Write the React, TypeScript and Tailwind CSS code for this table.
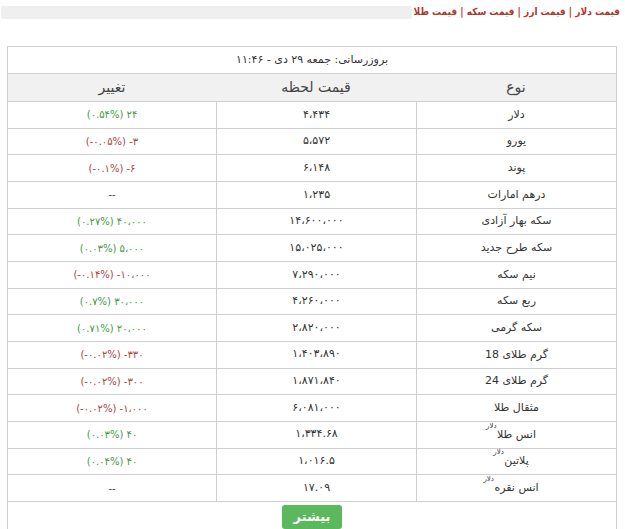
const rows: { name: string; unit?: boolean; price: string; change: string; tone: "up" | "down" | "none" }[] = [
  { name: "دلار", price: "۴،۴۳۴", change: "(۰.۵۴%) ۲۴", tone: "up" },
  { name: "یورو", price: "۵،۵۷۲", change: "(-۰.۰۵%) -۳", tone: "down" },
  { name: "پوند", price: "۶،۱۴۸", change: "(-۰.۱%) -۶", tone: "down" },
  { name: "درهم امارات", price: "۱،۲۳۵", change: "--", tone: "none" },
  { name: "سکه بهار آزادی", price: "۱۴،۶۰۰،۰۰۰", change: "(۰.۲۷%) ۴۰،۰۰۰", tone: "up" },
  { name: "سکه طرح جدید", price: "۱۵،۰۲۵،۰۰۰", change: "(۰.۰۳%) ۵،۰۰۰", tone: "up" },
  { name: "نیم سکه", price: "۷،۲۹۰،۰۰۰", change: "(-۰.۱۴%) -۱۰،۰۰۰", tone: "down" },
  { name: "ربع سکه", price: "۴،۲۶۰،۰۰۰", change: "(۰.۷%) ۳۰،۰۰۰", tone: "up" },
  { name: "سکه گرمی", price: "۲،۸۲۰،۰۰۰", change: "(۰.۷۱%) ۲۰،۰۰۰", tone: "up" },
  { name: "گرم طلای 18", price: "۱،۴۰۳،۸۹۰", change: "(-۰.۰۲%) -۳۳۰", tone: "down" },
  { name: "گرم طلای 24", price: "۱،۸۷۱،۸۴۰", change: "(-۰.۰۲%) -۳۰۰", tone: "down" },
  { name: "مثقال طلا", price: "۶،۰۸۱،۰۰۰", change: "(-۰.۰۲%) -۱،۰۰۰", tone: "down" },
  { name: "انس طلا", unit: true, price: "۱،۳۳۴.۶۸", change: "(۰.۰۳%) ۴۰", tone: "up" },
  { name: "پلاتین", unit: true, price: "۱،۰۱۶.۵", change: "(۰.۰۴%) ۴۰", tone: "up" },
  { name: "انس نقره", unit: true, price: "۱۷.۰۹", change: "--", tone: "none" },
];

function TitleBar() {
  return (
    <div className="flex items-center h-[14px] mt-[5px] pl-[1px] pr-[5px]">
      <div className="flex-1 h-[13px] bg-[#efefef] rounded-[2px]" />
      <p dir="rtl" className="pl-[2px] font-['DejaVu_Sans_Condensed','DejaVu_Sans',sans-serif] text-[10px] font-bold leading-[14px] text-[#b0372b] whitespace-nowrap">
        قیمت دلار | قیمت ارز | قیمت سکه | قیمت طلا
      </p>
    </div>
  );
}

function PriceRow({ row }: { row: (typeof rows)[number] }) {
  const toneClass = row.tone === "up" ? "text-[#3f9a3f]" : row.tone === "down" ? "text-[#a8443c]" : "text-[#444]";
  return (
    <div className="grid grid-cols-[200px_200px_1fr] h-[26.67px] border-t border-[#cfcfcf] text-[11px] text-[#333]">
      <div className="flex items-center justify-center border-l border-[#cfcfcf]">
        <span className="relative leading-[14px]">
          {row.name}
          {row.unit && <span className="absolute -top-[6px] -left-[11px] text-[7px] leading-[8px]">دلار</span>}
        </span>
      </div>
      <div className="flex items-center justify-center border-l border-[#cfcfcf]">{row.price}</div>
      <div className={`flex items-center justify-center ${toneClass}`}>
        <span dir="ltr" className="text-[10px]">{row.change}</span>
      </div>
    </div>
  );
}

export default function App() {
  return (
    <div className="w-[625px] h-[529px] bg-white overflow-hidden font-['DejaVu_Sans',sans-serif]">
      <TitleBar />
      <div dir="rtl" className="ml-[7px] mt-[27px] w-[610px] border border-[#cfcfcf]">
        <div className="h-[26px] flex items-center justify-center text-[11px] text-[#333]">
          بروزرسانی: جمعه ۲۹ دی - ۱۱:۴۶
        </div>
        <div className="grid grid-cols-[200px_200px_1fr] h-[28px] border-t border-[#cfcfcf] bg-[#f1f1f1] text-[14px] text-[#444]">
          <div className="flex items-center justify-center">نوع</div>
          <div className="flex items-center justify-center">قیمت لحظه</div>
          <div className="flex items-center justify-center">تغییر</div>
        </div>
        {rows.map((r) => (
          <PriceRow key={r.name} row={r} />
        ))}
        <div className="border-t border-[#cfcfcf] h-[40px] flex justify-center pt-[3px]">
          <button className="h-[24px] px-[12px] rounded-[3px] bg-[#5cb85c] text-white text-[13px] font-bold">بیشتر</button>
        </div>
      </div>
    </div>
  );
}
